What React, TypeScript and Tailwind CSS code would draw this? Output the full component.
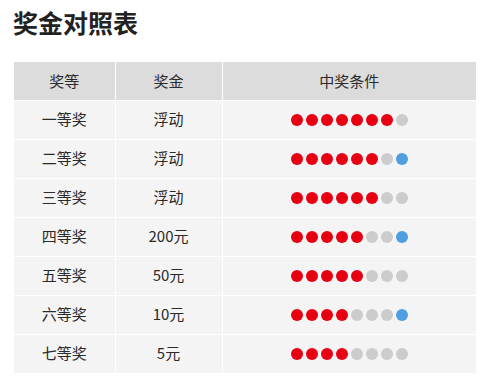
const rows = [
  { level: "一等奖", prize: "浮动", red: 7, gray: 1, blue: 0 },
  { level: "二等奖", prize: "浮动", red: 6, gray: 1, blue: 1 },
  { level: "三等奖", prize: "浮动", red: 6, gray: 2, blue: 0 },
  { level: "四等奖", prize: "200元", red: 5, gray: 2, blue: 1 },
  { level: "五等奖", prize: "50元", red: 5, gray: 3, blue: 0 },
  { level: "六等奖", prize: "10元", red: 4, gray: 3, blue: 1 },
  { level: "七等奖", prize: "5元", red: 4, gray: 4, blue: 0 },
];

function Balls({ red, gray, blue }: { red: number; gray: number; blue: number }) {
  const list: string[] = [
    ...Array(red).fill("bg-[#e60012]"),
    ...Array(gray).fill("bg-[#cccccc]"),
    ...Array(blue).fill("bg-[#4f9fe0]"),
  ];
  return (
    <div className="flex items-center justify-center gap-[3px]">
      {list.map((c, i) => (
        <span key={i} className={`block h-3 w-3 rounded-full ${c}`} />
      ))}
    </div>
  );
}

export default function App() {
  return (
    <div
      className="h-[381px] w-[486px] bg-white px-[14px] text-[#2a2a2a]"
      style={{ fontFamily: '"Noto Sans CJK SC", "Noto Sans", sans-serif' }}
    >
      <h1 className="-ml-px pt-[7px] text-[25px] font-bold leading-[30px] text-[#222]">奖金对照表</h1>
      <table className="mt-[25px] w-[462px] border-collapse text-center text-[15px]">
        <thead>
          <tr className="bg-[#dcdcdc]">
            <th className="h-[38px] w-[101px] border-r border-b border-white font-normal">奖等</th>
            <th className="w-[107px] border-r border-b border-white font-normal">奖金</th>
            <th className="border-b border-white font-normal">中奖条件</th>
          </tr>
        </thead>
        <tbody>
          {rows.map((r) => (
            <tr key={r.level} className="bg-[#f4f4f4]">
              <td className="h-[39px] border-r border-b border-white">{r.level}</td>
              <td className="border-r border-b border-white">{r.prize}</td>
              <td className="border-b border-white">
                <Balls red={r.red} gray={r.gray} blue={r.blue} />
              </td>
            </tr>
          ))}
        </tbody>
      </table>
    </div>
  );
}
